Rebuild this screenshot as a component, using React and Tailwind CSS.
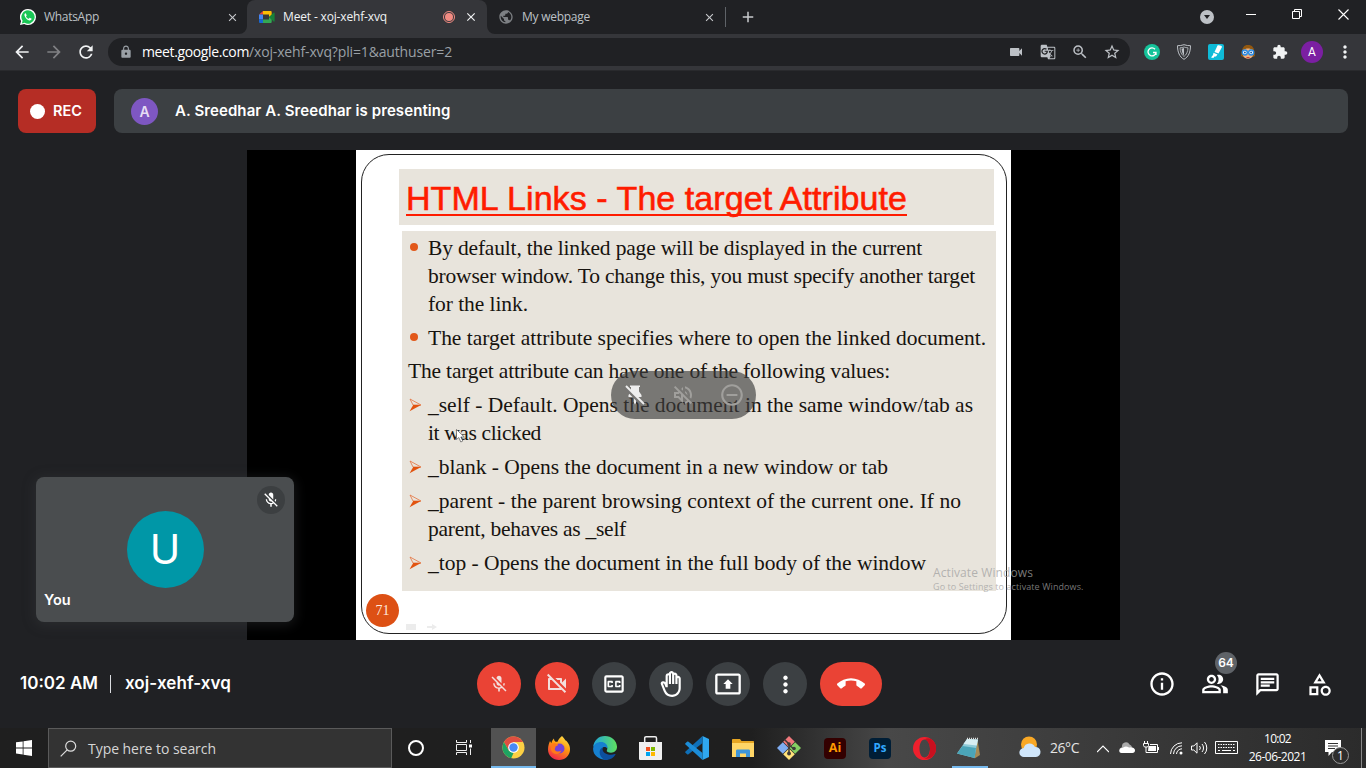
import React from 'react';
import {
  MdArrowBack, MdArrowForward, MdRefresh, MdLock, MdVideocam, MdGTranslate, MdZoomIn, MdStarBorder,
  MdExtension, MdMoreVert, MdMicOff, MdOutlineVideocamOff, MdOutlineClosedCaption, MdOutlineBackHand,
  MdOutlinePresentToAll, MdCallEnd, MdInfoOutline, MdOutlinePeopleAlt, MdOutlineChat, MdOutlineCategory,
  MdOutlineVolumeOff, MdRemoveCircleOutline, MdClose, MdAdd, MdPublic,
} from 'react-icons/md';

const seg = "font-['Open_Sans','Noto_Sans',sans-serif]";

function T({ className = '', children }) {
  return <span className={'inline-block whitespace-pre ' + className}>{children}</span>;
}

function WhatsApp() {
  return (
    <svg className="size-4" viewBox="0 0 16 16">
      <path d="M8 0a8 8 0 0 1 0 16 8 8 0 0 1-3.8-.9L0 16l1.1-3.9A8 8 0 0 1 8 0z" fill="#fff" />
      <path d="M8 1.3a6.7 6.7 0 1 1-3.4 12.5l-2.8.7.8-2.7A6.7 6.7 0 0 1 8 1.3z" fill="#19c655" />
      <path d="M5.6 4.2c-.9.3-1.4 1.2-1.1 2.3.5 2.2 2.4 4.3 4.7 5 1.200.3 2.100-.3 2.400-1.400.1-.4 0-.5-.3-.6l-1.300-.6c-.3-.1-.4-.1-.6.2l-.5.6c-.2.2-.3.2-.6.1-1-.5-1.700-1.200-2.200-2.100-.1-.3 0-.4.5-1 .1-.2.1-.3 0-.5l-.6-1.500c-.1-.3-.2-.4-.4-.5z" fill="#fff" />
    </svg>
  );
}

function MeetLogo() {
  return (
    <svg className="h-[14px] w-4" viewBox="0 0 16 14">
      <path d="M0 4.500 4 1v3.500z" fill="#ea4335" />
      <path d="M4 1h7.500c.8 0 1.200.4 1.200 1.200V5l-2.700 2V4.500H4z" fill="#fbbc04" />
      <path d="M0 4.500h4v5H0z" fill="#4285f4" />
      <path d="M0 9.500h4V13H1.200C.4 13 0 12.600 0 11.800z" fill="#1967d2" />
      <path d="M4 9.500h6V7l2.700 2v2.800c0 .8-.4 1.200-1.200 1.200H4z" fill="#34a853" />
      <path d="M10 7l4.600-4.300c.5-.4 1-.2 1 .4v8c0 .6-.5.8-1 .4z" fill="#188038" />
    </svg>
  );
}

function Tab({ children, className }) {
  return <div className={'flex h-[34px] items-center ' + className}>{children}</div>;
}

function Round({ className, children }) {
  return <div className={'flex h-11 shrink-0 items-center justify-center rounded-full text-white ' + className}>{children}</div>;
}

function Arrow() {
  return (
    <svg className="mt-[7px] h-[14px] w-[13px] shrink-0" viewBox="0 0 13 14">
      <path d="M1 1l11 6H4z" fill="none" stroke="#e4713c" strokeWidth=".8" />
      <path d="M12 7L.6 13.300 4.200 7z" fill="#e2530f" />
    </svg>
  );
}

function Item({ mark, children, className = '' }) {
  return (
    <div className={'flex ' + className}>
      <div className="flex w-[19px] shrink-0">{mark === 'dot' ? <div className="mt-[9px] ml-px size-2 rounded-full bg-[#e2581a]" /> : <Arrow />}</div>
      <div className="flex flex-col items-start">{children}</div>
    </div>
  );
}

function Tile({ className = '', children }) {
  return <div className={'flex h-10 shrink-0 items-center justify-center ' + className}>{children}</div>;
}

function TopChrome() {
  return (
    <div className={'flex h-[71px] flex-col border-b border-[#292a2d] bg-[#35363a] ' + seg}>
      <div className="flex h-[34px] bg-[#202124]">
        <Tab className="w-[247px] pl-5">
          <WhatsApp />
          <div className="ml-2 w-[182px] text-[12px] text-[#bdc1c6]"><T className="tracking-[-0.297px]">WhatsApp</T></div>
          <MdClose className="size-[13px] text-[#c8cacd]" />
        </Tab>
        <Tab className="relative w-[240px] rounded-t-lg bg-[#35363a] pl-3">
          <svg className="absolute bottom-0 -left-2 size-2" viewBox="0 0 8 8"><path d="M8 0v8H0a8 8 0 0 0 8-8z" fill="#35363a" /></svg>
          <svg className="absolute -right-2 bottom-0 size-2" viewBox="0 0 8 8"><path d="M0 0v8h8a8 8 0 0 1-8-8z" fill="#35363a" /></svg>
          <MeetLogo />
          <div className="ml-2 w-[160px] text-[12px] text-[#f1f3f4]"><T className="tracking-[-0.155px]">Meet - xoj-xehf-xvq</T></div>
          <div className="flex size-3 items-center justify-center rounded-full border border-[#f28b82]"><div className="size-2 rounded-full bg-[#f28b82]" /></div>
          <MdClose className="ml-[9px] size-[14px] text-[#f1f3f4]" />
        </Tab>
        <Tab className="w-[238px] pl-[11px]">
          <MdPublic className="size-4 text-[#7d8084]" />
          <div className="ml-2 w-[181px] text-[12px] text-[#bdc1c6]"><T className="tracking-[-0.258px]">My webpage</T></div>
          <MdClose className="size-[13px] text-[#c8cacd]" />
        </Tab>
        <div className="mt-[7px] h-5 w-px bg-[#5f6368]" />
        <MdAdd className="mt-[8px] ml-[13px] size-[18px] text-[#c8cacd]" />
        <div className="ml-auto flex">
          <div className="mt-[10px] mr-8 flex size-[14px] items-center justify-center rounded-full bg-[#bdc1c6]">
            <svg className="size-[6px]" viewBox="0 0 6 6"><path d="M0 1h6L3 5z" fill="#202124" /></svg>
          </div>
          <div className="mt-[14px] h-px w-[10px] bg-white" />
          <svg className="mt-[9px] ml-[36px] h-[10px] w-[10px]" viewBox="0 0 10 10" fill="none" stroke="#fff"><path d="M.5 2.500h7v7h-7zM2.500 2.500v-2h7v7h-2" /></svg>
          <svg className="mt-[9px] mr-[17px] ml-9 size-[11px]" viewBox="0 0 11 11" stroke="#fff" strokeWidth="1.100"><path d="M.5.5l10 10M10.500.5l-10 10" /></svg>
        </div>
      </div>
      <div className="flex h-9 items-center">
        <MdArrowBack className="ml-3 size-5 text-[#f1f3f4]" />
        <MdArrowForward className="ml-3 size-5 text-[#808184]" />
        <MdRefresh className="ml-3 size-5 text-[#f1f3f4]" />
        <div className="ml-[12px] flex h-7 w-[1022px] items-center rounded-full bg-[#202124] pl-[11px]">
          <MdLock className="size-[14px] text-[#9aa0a6]" />
          <div className="ml-[9px] flex text-[14px] leading-5">
            <T className="tracking-[-0.371px] text-white">meet.google.com</T>
            <T className="tracking-[-0.149px] text-[#9aa0a6]">/xoj-xehf-xvq?pli=1&authuser=2</T>
          </div>
          <div className="ml-auto flex items-center text-[#bdc1c6]">
            <MdVideocam className="mr-[16px] size-4" />
            <MdGTranslate className="mr-[15px] size-4" />
            <MdZoomIn className="mr-[14px] size-[18px]" />
            <MdStarBorder className="mr-[9px] size-[18px]" />
          </div>
        </div>
        <div className="ml-[14px] flex size-4 items-center justify-center rounded-full bg-[#15c39a]">
          <svg className="size-[10px]" viewBox="0 0 10 10" fill="none" stroke="#fff" strokeWidth="1.300"><path d="M8 2.200A4 4 0 1 0 9 5.500H6M9 5.500V8" /></svg>
        </div>
        <svg className="ml-4 size-4" viewBox="0 0 16 16" fill="none" stroke="#bdc1c6"><path d="M8 .7c2.200.8 4.500 1 6.500 1C14.500 8 12.500 13 8 15.300 3.500 13 1.500 8 1.500 1.700c2 0 4.300-.2 6.500-1z" /><path d="M4 3.800C5.500 3.800 6.800 3.500 8 3c1.200.5 2.500.8 4 .8-.2 4-1.500 7-4 8.700C5.500 10.800 4.200 7.800 4 3.800z" strokeWidth=".8" /><path d="M8 4v7.500c-1.500-1.500-2.200-4-2.500-6.800z" fill="#bdc1c6" stroke="none" /></svg>
        <svg className="ml-4 size-4" viewBox="0 0 16 16"><rect width="16" height="16" rx="2" fill="#0fbbd8" /><path d="M9.500 1.500c1-.8 4.500 0 4.500 1.500L10.500 9.500 6.500 8z" fill="#fff" /><path d="M5.500 8.800l4 1.800-1.500 2H6.500L5.300 14 3 13.500l2-2.500z" fill="#fff" /></svg>
        <svg className="ml-4 size-4" viewBox="0 0 16 16"><path d="M1 12C2 3 4 1 8 1s6.500 2 7 11c-4 2-9 3-14 0z" fill="#93580f" /><path d="M3 6c3-2 7-2 10 0v5c-1 5-9 5-10 0z" fill="#f0b27e" /><circle cx="4.800" cy="8.500" r="2.500" fill="#fff" stroke="#268be8" strokeWidth="1.400" /><circle cx="11.200" cy="8.500" r="2.500" fill="#fff" stroke="#268be8" strokeWidth="1.400" /><circle cx="4.900" cy="8.500" r=".9" fill="#0c4f9c" /><circle cx="11.100" cy="8.500" r=".9" fill="#0c4f9c" /><path d="M6.500 13.500h3" stroke="#c43c2f" /></svg>
        <MdExtension className="ml-4 size-4 text-[#f1f3f4]" />
        <div className="ml-[13px] flex size-[22px] items-center justify-center rounded-full bg-[#7b1fa2] font-[Roboto,sans-serif] text-[12px] text-white">A</div>
        <MdMoreVert className="ml-3 size-5 text-[#f1f3f4]" />
      </div>
    </div>
  );
}

function Slide() {
  return (
    <div className="flex h-[490px] w-[873px] justify-center bg-black">
      <div className="flex w-[655px] bg-white pt-1 pl-[5px]">
        <div className="h-[480px] w-[646px] rounded-[28px] border border-[#222]">
          <div className="mt-[14px] ml-[37px] h-14 w-[595px] bg-[#e8e4dc] pt-[9px] pl-[7px] font-['Liberation_Sans',Arial,sans-serif] text-[34px] leading-[40px] text-[#ff1c00] [-webkit-text-stroke:0.6px_#ff1c00]">
            <T className="tracking-[0.064px] underline decoration-2 underline-offset-[4px] [text-decoration-skip-ink:none]">HTML Links - The target Attribute</T>
          </div>
          <div className="mt-[6px] ml-10 h-[360px] w-[594px] bg-[#e8e4dc] pt-[3px] pl-[7px] font-['Liberation_Serif','Times_New_Roman',serif] text-[21.5px] leading-7 text-[#17130f]">
            <Item mark="dot">
              <T className="tracking-[-0.175px]">By default, the linked page will be displayed in the current</T>
              <T className="tracking-[-0.196px]">browser window. To change this, you must specify another target</T>
              <T className="tracking-[-0.071px]">for the link.</T>
            </Item>
            <Item mark="dot" className="mt-[6px]"><T className="tracking-[-0.006px]">The target attribute specifies where to open the linked document.</T></Item>
            <div className="mt-[5px] -ml-px"><T className="tracking-[-0.175px]">The target attribute can have one of the following values:</T></div>
            <Item className="mt-[6px]">
              <T className="tracking-[-0.002px]">_self - Default. Opens the document in the same window/tab as</T>
              <T className="tracking-[-0.373px]">it was clicked</T>
            </Item>
            <Item className="mt-[6px]"><T className="tracking-[-0.019px]">_blank - Opens the document in a new window or tab</T></Item>
            <Item className="mt-[6px]">
              <T className="tracking-[0.026px]">_parent - the parent browsing context of the current one. If no</T>
              <T className="tracking-[-0.257px]">parent, behaves as _self</T>
            </Item>
            <Item className="mt-[6px]"><T className="tracking-[-0.032px]">_top - Opens the document in the full body of the window</T></Item>
          </div>
        </div>
      </div>
    </div>
  );
}

function Meet() {
  return (
    <div className="relative flex h-[657px] flex-col bg-[#202124] font-[Inter,sans-serif]">
      <div className="mt-[18px] ml-[18px] flex h-11 gap-[18px] text-white">
        <div className="flex w-[78px] items-center rounded-lg bg-[#b52d25] pl-3">
          <div className="size-[15px] rounded-full bg-white" />
          <T className="ml-2 text-[14.5px] font-semibold">REC</T>
        </div>
        <div className="flex w-[1234px] items-center rounded-lg bg-[#3c4043] pl-[17px]">
          <div className="flex size-[27px] items-center justify-center rounded-full bg-[#7e57c2] text-[14px] font-semibold text-[#e6ddf4]">A</div>
          <T className="ml-[17px] text-[15px] font-semibold tracking-[0.09px]">A. Sreedhar A. Sreedhar is presenting</T>
        </div>
      </div>
      <div className="mt-[17px] ml-[247px]"><Slide /></div>
      <div className="flex h-[88px] items-center text-white">
        <div className="flex w-[477px] items-center pl-5 text-[17px] font-semibold">
          <T>10:02 AM</T>
          <div className="mr-[14px] ml-3 h-[18px] w-px bg-[#dadce0]" />
          <T className="tracking-[0.07px]">xoj-xehf-xvq</T>
        </div>
        <div className="flex gap-[13px]">
          <Round className="mr-px w-11 bg-[#ea4335]"><MdMicOff className="size-5 text-[#f3dedc]" /></Round>
          <Round className="w-11 bg-[#ea4335]"><MdOutlineVideocamOff className="size-6 text-[#f3dedc]" /></Round>
          <Round className="w-11 bg-[#3c4043]"><MdOutlineClosedCaption className="size-[26px]" /></Round>
          <Round className="w-11 bg-[#3c4043]"><MdOutlineBackHand className="size-[26px]" /></Round>
          <Round className="w-11 bg-[#3c4043]"><MdOutlinePresentToAll className="size-7" /></Round>
          <Round className="w-11 bg-[#3c4043]"><MdMoreVert className="size-[27px]" /></Round>
          <Round className="w-[62px] bg-[#ea4335]"><MdCallEnd className="size-[28px]" /></Round>
        </div>
        <div className="ml-auto flex items-center gap-[25px] pr-[33px]">
          <MdInfoOutline className="size-7" />
          <div className="relative">
            <MdOutlinePeopleAlt className="size-7" />
            <div className="absolute -top-[18px] left-[14px] flex size-[22px] items-center justify-center rounded-full bg-[#5f6368] text-[12px] font-semibold">64</div>
          </div>
          <MdOutlineChat className="size-[27px]" />
          <MdOutlineCategory className="size-[27px]" />
        </div>
      </div>

      <div className="absolute top-[300px] left-[611px] flex h-12 w-[145px] items-center rounded-full bg-[#3c3c3c]/65 pl-3">
        <svg className="size-6" viewBox="0 0 24 24"><path d="M17 4V2.500H7V4h1v4.500L5.500 12v2H11v6l1 1.500 1-1.500v-6h5.500v-2L16 8.500V4z" fill="#eee" /><path d="M2 4.500l18 18" stroke="#777674" strokeWidth="3" /><path d="M3 3l18 18" stroke="#eee" strokeWidth="2" /></svg>
        <MdOutlineVolumeOff className="ml-6 size-6 text-[#a09f9c]" />
        <MdRemoveCircleOutline className="ml-6 size-[26px] text-[#a09f9c]" />
      </div>

      <svg className="absolute top-[358px] left-[456px] h-[14px] w-[9px]" viewBox="0 0 9 14"><path d="M.5.5v10l2.300-2 2 4.500 2-1-2-4h3.500z" fill="#fff" stroke="#555" strokeWidth=".7" /></svg>

      <div className="absolute top-[523px] left-[366px] flex size-[33px] items-center justify-center rounded-full bg-[#dd5014] font-['Liberation_Serif',serif] text-[14px] text-[#ffe9dc]">71</div>
      <svg className="absolute top-[552px] left-[404px] h-2 w-9" viewBox="0 0 36 8" fill="#ececec"><path d="M2 1h10v6H2zM23 3h5V1l5 3-5 3V5h-5z" /></svg>

      <div className="absolute top-[406px] left-9 h-[145px] w-[258px] rounded-lg bg-[#4a4d4f] shadow-[0_2px_12px_2px_rgba(60,64,67,0.35)]">
        <div className="flex h-full items-center justify-center">
          <div className="flex size-[77px] items-center justify-center rounded-full bg-[#0097a7] text-[41px] text-white">U</div>
        </div>
        <div className="absolute top-[9px] right-[9px] flex size-7 items-center justify-center rounded-full bg-[#3c3f41]"><MdMicOff className="size-[18px] text-white" /></div>
        <div className="absolute bottom-[12px] left-2 text-[14.5px] leading-5 font-semibold text-white"><T>You</T></div>
      </div>

      <div className={'absolute top-[494px] left-[933px] text-[#a0a0a0]/75 ' + seg}>
        <div className="text-[12px] leading-4"><T className="tracking-[0.095px]">Activate Windows</T></div>
        <div className="text-[9px] leading-3"><T className="tracking-[0.087px]">Go to Settings to activate Windows.</T></div>
      </div>
    </div>
  );
}

function Taskbar() {
  return (
    <div className={'flex h-10 bg-linear-to-r from-[#1f1f1f] from-55% via-[#484848] via-65% to-[#2b2b2b] text-white ' + seg}>
      <Tile className="w-12">
        <svg className="size-4" viewBox="0 0 16 16" fill="#fff"><path d="M0 2.300l6.700-.9v6.100H0zM7.500 1.300L16 0v7.500H7.500zM0 8.400h6.700v6.200L0 13.600zM7.500 8.400H16V16l-8.500-1.200z" /></svg>
      </Tile>
      <div className="flex h-10 w-[344px] items-center border border-[#5a5a5a] bg-[#333] pl-[11px]">
        <svg className="size-[17px]" viewBox="0 0 17 17" fill="none" stroke="#dcdcdc" strokeWidth="1.200"><circle cx="10.700" cy="6.200" r="5" /><path d="M7.200 9.800L.7 16.300" /></svg>
        <T className="ml-[11px] text-[14px] tracking-[-0.044px] text-[#d6d6d6]">Type here to search</T>
      </div>
      <Tile className="w-12"><div className="size-4 rounded-full border-2 border-white" /></Tile>
      <Tile className="w-12">
        <svg className="size-4" viewBox="0 0 16 16" fill="none" stroke="#eee"><path d="M.5 0v2.500h10V0M.5 4.500h10v6H.5zM.5 15v-2.500h10V15M14.500 0v3M14.500 8.500V15" /><path d="M13 4.500h3v3h-3z" fill="#fff" stroke="none" /></svg>
      </Tile>
      <div className="ml-[3px] flex h-10 w-[45px] flex-col items-center border-b-2 border-[#76b9ed] bg-[#525252] pt-2">
        <svg className="size-[23px] shrink-0" viewBox="0 0 24 24"><circle cx="12" cy="12" r="11.500" fill="#fdd044" /><path d="M2 6.300a11.500 11.500 0 0 1 20 0H12v6L7 15z" fill="#df4f41" /><path d="M2 6.300l5.200 9 4.800 2.500-2.400 5.500A11.500 11.500 0 0 1 2 6.300z" fill="#1ea362" /><circle cx="12" cy="12" r="5.600" fill="#fff" /><circle cx="12" cy="12" r="4.400" fill="#4a8af4" /></svg>
      </div>
      <Tile className="w-[46px]">
        <svg className="size-6" viewBox="0 0 24 24">
          <defs><linearGradient id="ff" x1=".8" y1="0" x2=".3" y2="1"><stop offset="0" stopColor="#ffe14a" /><stop offset=".45" stopColor="#ff980e" /><stop offset="1" stopColor="#f2244c" /></linearGradient></defs>
          <path d="M15 0c2 2 3 3.500 3.500 4.500 1 .2 2 1.500 2.500 2.500 1 1.500 2.300 3.500 2 7C22.500 20 18 24 12 24S1 19.500 1 13.500C1 10 2 7 3 5l1.300 2.300C5 4.500 6 3.500 7 2.500c0 1.500.5 2.500 1.500 3.200h2C11.500 3 13 1.500 15 0z" fill="url(#ff)" />
          <circle cx="12.500" cy="12.500" r="5" fill="#7542d8" /><path d="M4.500 8c3-1.500 4 0 6.500.2.500 1-1 1.500-2.500 2.300 0 1.500-1 2-1 3 1 2 4 3 7 1-2 5-9 4.500-10.500-.5z" fill="#ff7a1a" />
        </svg>
      </Tile>
      <Tile className="w-[46px]">
        <svg className="size-6" viewBox="0 0 24 24">
          <defs><linearGradient id="e1"><stop offset="0" stopColor="#1fa5dc" /><stop offset="1" stopColor="#5fe05f" /></linearGradient></defs>
          <path d="M12 0C5 0 1 5 .2 10.500L9 8c4.500 0 6 3.500 5 6-.9 1.300.5 2.700 4 2.700 4 0 6.200-2.700 6-6.200C23.500 4.500 18.500 0 12 0z" fill="url(#e1)" />
          <path d="M.1 12.500C.5 8 4.500 6 8 6c4.500 0 7.200 3.500 6.300 6.500-1-1.300-2.300-1.700-3.800-1.500-3 2-2.500 8.500 4.500 12.600C8 25-.3 20 .1 12.500z" fill="#1680cf" />
          <path d="M9.800 11.300C5 13.500 5.500 21 12 24c4.500.2 8.500-2 10.500-5.500.2-.5-.2-.7-.6-.5C17 20 11 18 9.800 14.500c-.4-1.200-.4-2.300 0-3.200z" fill="#0c4f9e" />
        </svg>
      </Tile>
      <Tile className="w-[45px]">
        <svg className="h-6 w-[23px]" viewBox="0 0 23 24"><path d="M5.700 7V2.200c0-1 .5-1.400 1.400-1.400h9c.9 0 1.400.4 1.400 1.400V7" fill="none" stroke="#eee" strokeWidth="1.500" /><path d="M0 6h23v16.500c0 1-.5 1.500-1.500 1.500h-20C.5 24 0 23.500 0 22.500z" fill="#f0f0f0" /><path d="M7 11h4v4H7z" fill="#f25022" /><path d="M12 11h4v4h-4z" fill="#7fba00" /><path d="M7 16h4v4H7z" fill="#00a4ef" /><path d="M12 16h4v4h-4z" fill="#ffb900" /></svg>
      </Tile>
      <Tile className="w-[47px]">
        <svg className="size-6" viewBox="0 0 24 24"><path d="M17.500 0L24 3v18l-6.500 3z" fill="#2fa8f0" /><path d="M17.500 0v7L3.500 18.300c-.5.4-1 .4-1.400 0L.5 16.800c-.5-.5-.4-1 0-1.400z" fill="#0f70b8" /><path d="M17.500 24v-7L3.500 5.700c-.5-.4-1-.4-1.400 0L.5 7.200c-.5.5-.4 1 0 1.400z" fill="#1c8dd8" /></svg>
      </Tile>
      <Tile className="w-[45px]">
        <svg className="h-[19px] w-[22px]" viewBox="0 0 22 19"><path d="M0 1c0-.6.4-1 1-1h7l1.500 2H21c.6 0 1 .4 1 1v3H0z" fill="#e6a522" /><path d="M0 4h22v14H0z" fill="#ffd667" /><path d="M4 18v-6c0-1 .5-1.500 1.500-1.500h11c1 0 1.500.5 1.500 1.500v6h-4v-3.500H8V18z" fill="#3e95d8" /></svg>
      </Tile>
      <Tile className="w-[47px]">
        <svg className="size-6" viewBox="0 0 24 24"><path d="M12 0l5.800 5.800L12 11.600 6.200 5.800z" fill="#f0787c" /><path d="M18.200 6.200L24 12l-5.800 5.800L12.400 12z" fill="#84cf62" /><path d="M5.800 6.200l5.800 5.800-5.800 5.800L0 12z" fill="#7fadf2" /><path d="M12 12.400l5.800 5.800L12 24l-5.800-5.800z" fill="#ffe27a" /><path d="M7.500 3.500L12 8v10M12 9l5 4" stroke="#3c3a38" strokeWidth="1.500" fill="none" /><circle cx="12" cy="8" r="1.800" fill="#3c3a38" /><circle cx="12" cy="17.500" r="1.900" fill="#3c3a38" /><circle cx="17" cy="12.500" r="1.800" fill="#3c3a38" /></svg>
      </Tile>
      <Tile className="w-[46px]"><div className="flex h-[21px] w-[22px] items-center justify-center rounded-[4px] bg-[#330000] text-[12.5px] font-bold text-[#ff9a00]">Ai</div></Tile>
      <Tile className="w-[44px]"><div className="flex h-[21px] w-[22px] items-center justify-center rounded-[4px] bg-[#001e36] text-[11.5px] font-bold text-[#31a8ff]">Ps</div></Tile>
      <Tile className="w-[45px]">
        <svg className="size-[23px]" viewBox="0 0 23 23"><path fillRule="evenodd" d="M11.500 0a11.500 11.500 0 1 1 0 23 11.500 11.500 0 0 1 0-23zm0 2.500c-3 0-5 4-5 9s2 9 5 9 5.500-4 5.500-9-2.500-9-5.500-9z" fill="#f0202d" /><path d="M11.500 2.500C15 0 19 2 20 3.800c4.500 4.700 4 11.500-.5 16-2 1.500-5 2.500-8 1.700 3 0 5.500-4 5.500-9s-2.500-10-5.500-10z" fill="#c8101f" /></svg>
      </Tile>
      <div className="ml-[5px] flex h-10 w-9 flex-col items-center border-b-2 border-[#76b9ed] pt-[9px]">
        <svg className="mr-[2px] h-[22px] w-6 shrink-0" viewBox="0 0 24 22"><path d="M20.500 3l2.500 15-5.500 3.500z" fill="#a58a55" /><path d="M10 2l11 .5L17.500 21 0 16.500z" fill="#8fcbd8" /><path d="M10 2l11 .5-1.300 6L6.500 7z" fill="#d8eef2" /><path d="M5.500 9l13.500 2-1.500 10L0 16.500z" fill="#4ba5b8" /><path d="M10 1.500h11" stroke="#ddd" strokeWidth="1.500" strokeDasharray="1 1" /></svg>
      </div>
      <svg className="mt-2 ml-[31px] size-[22px]" viewBox="0 0 22 22"><circle cx="10" cy="8.500" r="8" fill="#f9a825" /><path d="M5 21a4.500 4.500 0 0 1-.3-9A6 6 0 0 1 16 11a5 5 0 0 1 1 10z" fill="#cfe5fa" /></svg>
      <div className="mt-[10px] ml-[9px] w-[47px] text-[14px] leading-5 text-[#e4e4e4]"><T className="tracking-[-0.457px]">26°C</T></div>
      <svg className="mt-4 size-3" viewBox="0 0 12 12" fill="none" stroke="#fff" strokeWidth="1.200"><path d="M0 8l6-6 6 6" /></svg>
      <svg className="mt-[14px] ml-[10px] h-[11px] w-4" viewBox="0 0 16 11"><path d="M3 10.500A3 3 0 0 1 3 5a4 4 0 0 1 7.500-2.500A3.500 3.500 0 0 1 13 5z" fill="#aaa" /><path d="M2.500 11a2.500 2.500 0 0 1 .5-5c1 0 2-1.500 4-1.500s3 1.500 4 1 5 0 5 3c0 1.500-1 2.500-2.500 2.500z" fill="#fff" /></svg>
      <svg className="mt-[13px] ml-2 h-[13px] w-4" viewBox="0 0 16 13" fill="none" stroke="#fff"><path d="M1.500 0v2.500M4.500 0v2.500M.5 2.500h5v2l-1 1.500h-3l-1-1.500zM3 6v5.500h11.500v-8H7" /><path d="M5.500 5h7.500v5h-8zM15 6h1v3h-1z" fill="#fff" stroke="none" /></svg>
      <svg className="mt-[14px] ml-[11px] size-[13px]" viewBox="0 0 13 13" fill="none" stroke="#fff" strokeWidth="1"><path d="M.5 12A11.500 11.500 0 0 1 12 .8M3.500 12A8.500 8.500 0 0 1 12 3.800M6.500 12A5.500 5.500 0 0 1 12 6.800" /><circle cx="11" cy="11" r="1.500" fill="#fff" stroke="none" /></svg>
      <svg className="mt-[13px] ml-2 h-[14px] w-[17px]" viewBox="0 0 17 14" fill="none" stroke="#fff"><path d="M.5 5h2.300L6 1.800v10.400L2.800 9H.5zM8.500 5a3 3 0 0 1 0 4M11 3a6 6 0 0 1 0 8M13.500 1a9 9 0 0 1 0 12" /></svg>
      <svg className="mt-[13px] ml-[7px] h-[13px] w-[23px]" viewBox="0 0 23 13" fill="none" stroke="#fff"><path d="M.5.5h22v12H.5z" /><path d="M3 3.500h17M3 6.500h17" strokeDasharray="1.500 1" /><path d="M3 9.500h2M7 9.500h9M18 9.500h2" /></svg>
      <div className="ml-[9px] flex w-[61px] flex-col items-center pt-[2px] text-[12px] leading-[18px]"><T className="tracking-[-0.722px]">10:02</T><T className="tracking-[-0.512px]">26-06-2021</T></div>
      <div className="relative ml-[17px] w-6">
        <svg className="mt-3 size-4" viewBox="0 0 16 16"><path d="M0 0h16v12H7l-3.500 4v-4H0z" fill="#fff" /><path d="M3 3.500h10M3 6h10M3 8.500h7" stroke="#333" /></svg>
        <div className="absolute top-[19px] left-[7px] flex size-[17px] items-center justify-center rounded-full border border-[#999] bg-[#2d2d2d] text-[12px]">1</div>
      </div>
      <div className="ml-auto h-10 w-[5px] border-l border-[#888]" />
    </div>
  );
}

export default function App() {
  return (
    <div className="flex h-[768px] w-[1366px] flex-col overflow-hidden bg-[#202124]">
      <TopChrome />
      <Meet />
      <Taskbar />
    </div>
  );
}
